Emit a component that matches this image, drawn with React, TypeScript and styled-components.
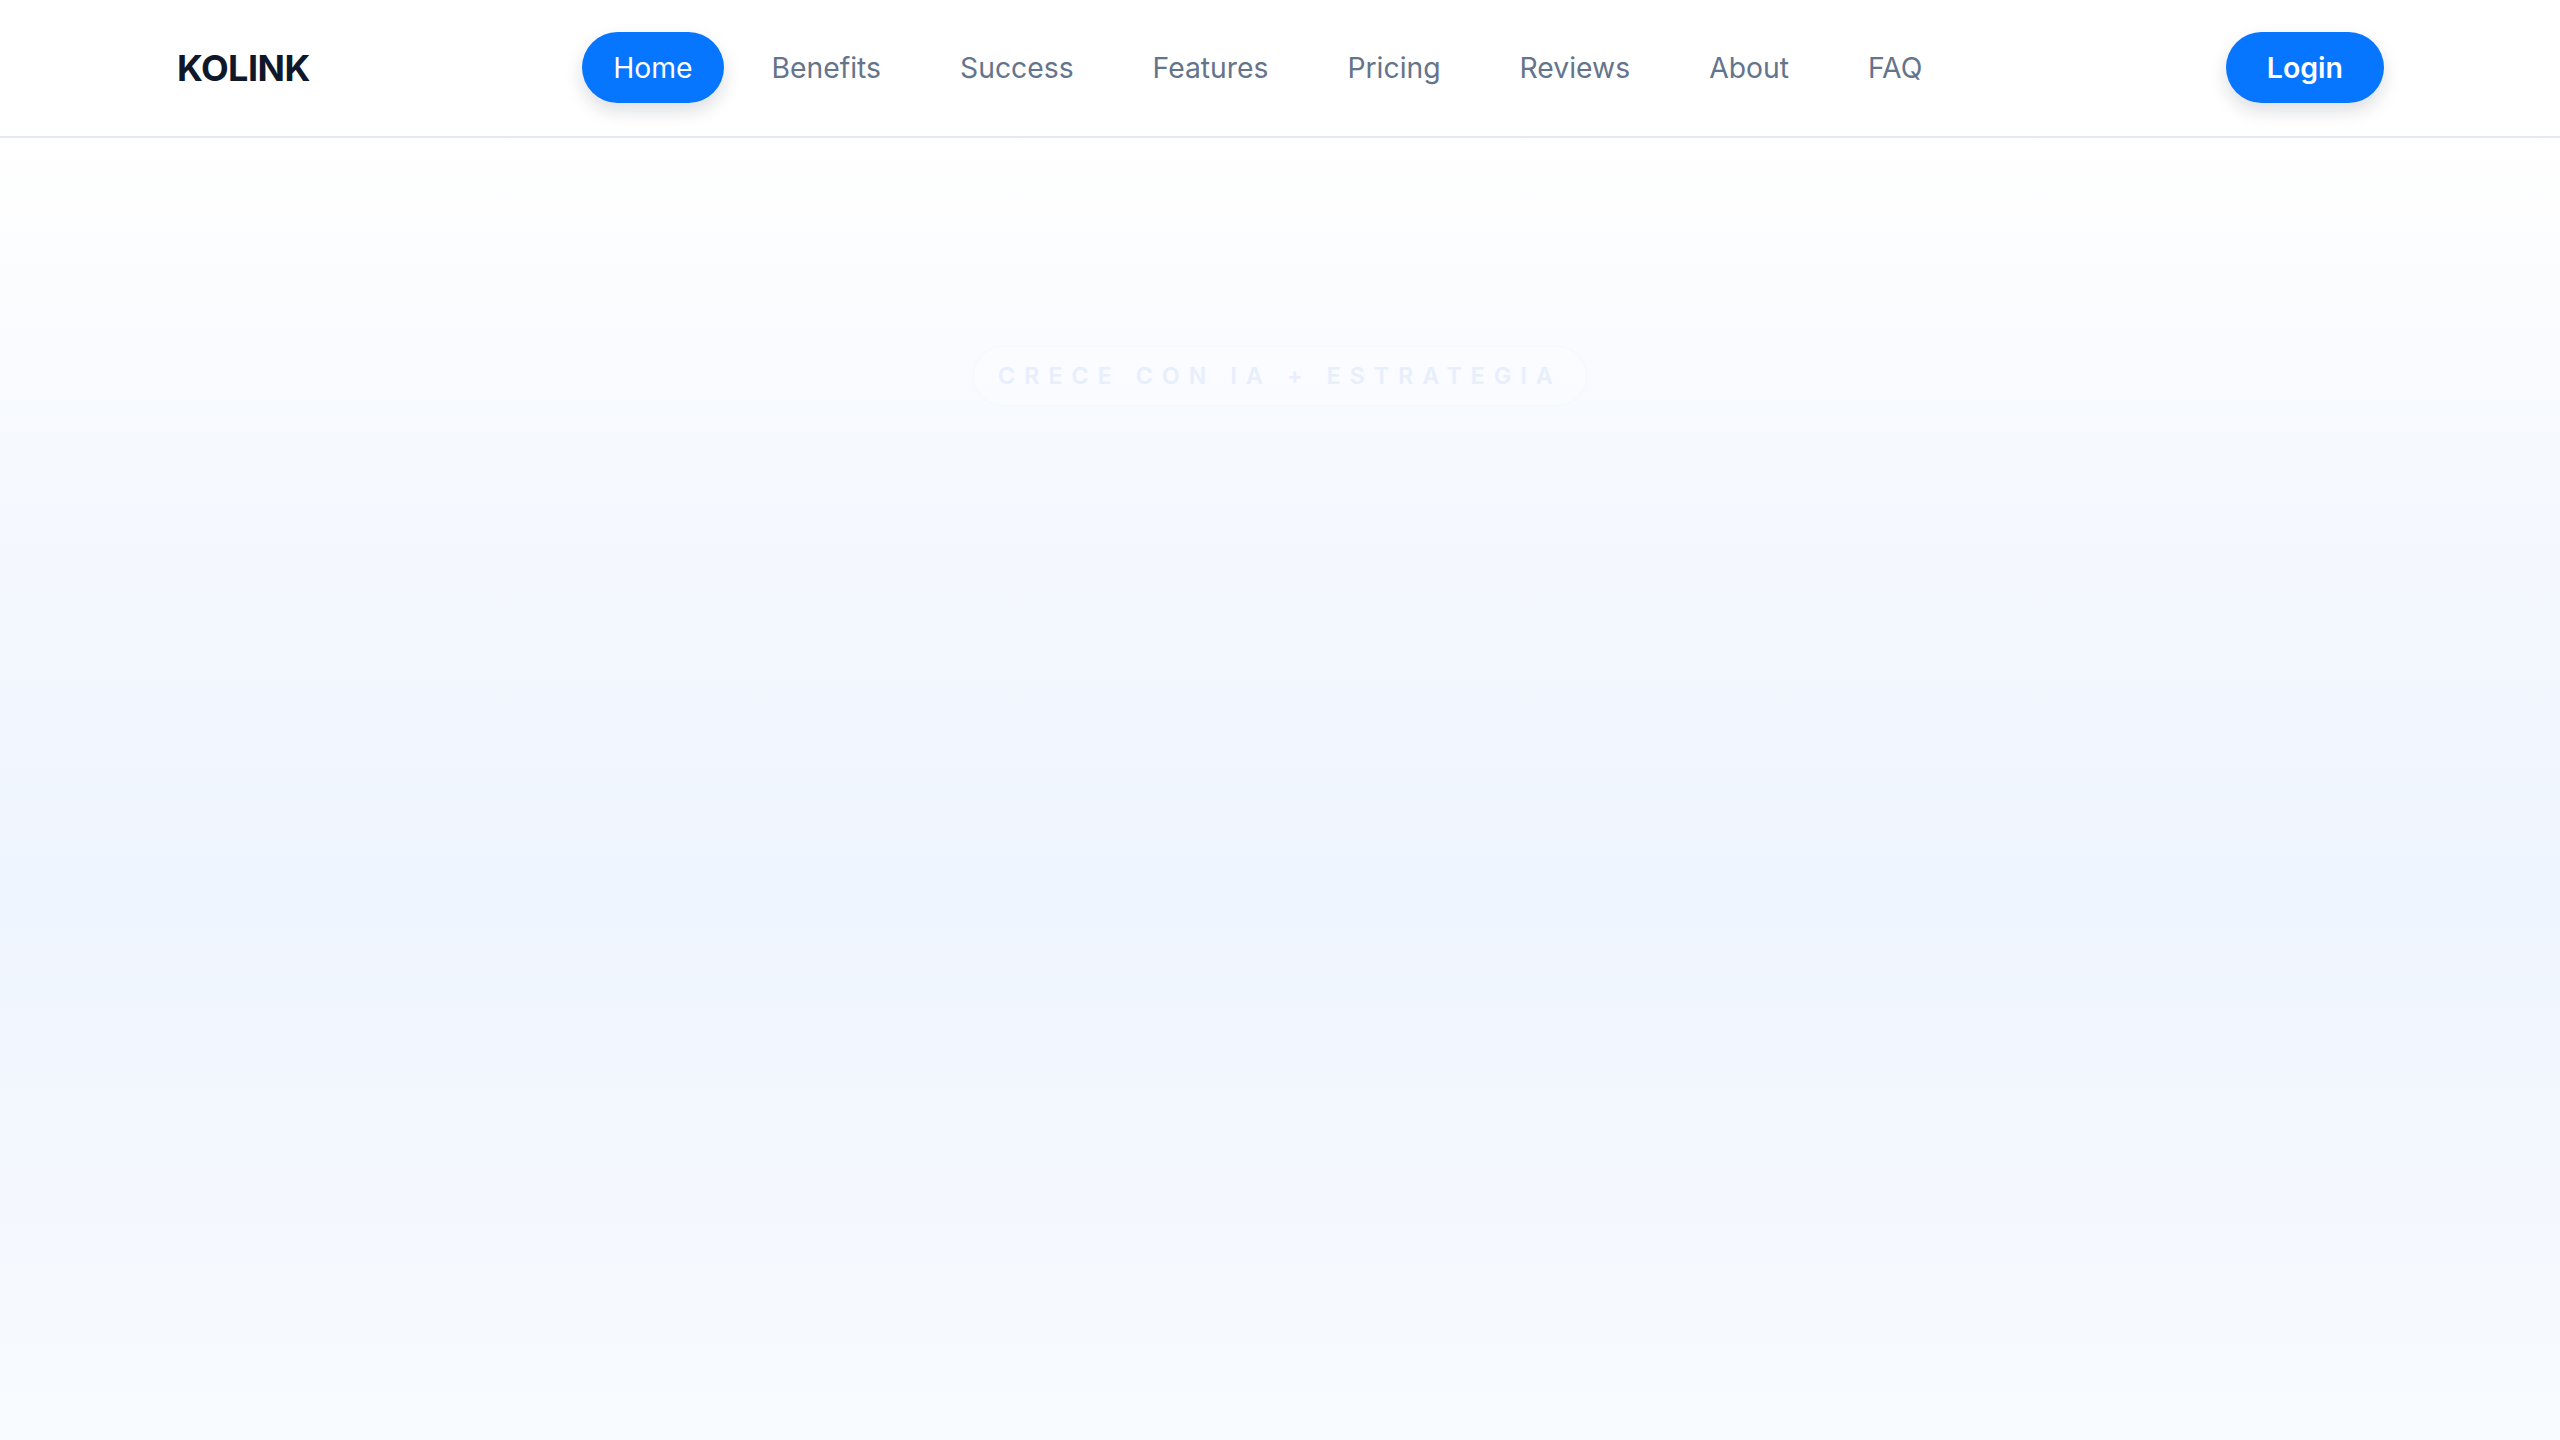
import React from "react";
import styled, { createGlobalStyle } from "styled-components";

const GlobalStyle = createGlobalStyle`
  * { box-sizing: border-box; }
  html, body { margin: 0; padding: 0; }
  body {
    font-family: Inter, "Noto Sans", "Liberation Sans", sans-serif;
    background: #ffffff;
    -webkit-font-smoothing: antialiased;
  }
`;

const Page = styled.div`
  min-height: 100vh;
  display: flex;
  flex-direction: column;
`;

const Header = styled.header`
  height: 138px;
  background: #ffffff;
  border-bottom: 2px solid #e4e9f3;
  display: flex;
  justify-content: center;
`;

const HeaderInner = styled.div`
  width: 100%;
  max-width: 2208px;
  display: flex;
  align-items: center;
  justify-content: space-between;
  padding-bottom: 1px;
`;

const Logo = styled.div`
  font-size: 36px;
  font-weight: 700;
  letter-spacing: -0.015em;
  color: #0f172a;
  padding-left: 1px;
`;

const Nav = styled.nav`
  display: flex;
  align-items: center;
  gap: 16px;
`;

const NavItem = styled.a<{ $active?: boolean }>`
  display: inline-flex;
  align-items: center;
  height: 71px;
  padding: 0 31.5px;
  border-radius: 999px;
  font-size: 28.3px;
  font-weight: 400;
  text-decoration: none;
  color: ${(p) => (p.$active ? "#ffffff" : "#64748b")};
  background: ${(p) => (p.$active ? "#0675ff" : "transparent")};
  box-shadow: ${(p) =>
    p.$active ? "0 8px 18px rgba(15, 23, 42, 0.14)" : "none"};
`;

const LoginButton = styled.button`
  height: 71px;
  padding: 0 41px;
  border: none;
  border-radius: 999px;
  background: #0675ff;
  color: #ffffff;
  font-family: inherit;
  font-size: 28.5px;
  font-weight: 600;
  box-shadow: 0 8px 18px rgba(15, 23, 42, 0.14);
`;

const Hero = styled.section`
  flex: 1;
  background: linear-gradient(
    180deg,
    #ffffff 0%,
    #f6f9fe 25%,
    #eff5fe 58%,
    #f4f8fe 80%,
    #f8fbff 100%
  );
  display: flex;
  flex-direction: column;
  align-items: center;
  padding-top: 208px;
`;

const Eyebrow = styled.div`
  display: inline-flex;
  align-items: center;
  height: 60px;
  padding: 0 24px;
  border-radius: 999px;
  background: rgba(255, 255, 255, 0.3);
  border: 1px solid rgba(226, 234, 248, 0.25);
  font-size: 23px;
  font-weight: 600;
  letter-spacing: 0.4em;
  color: #e7eefc;
  text-transform: uppercase;
`;

const navLinks = [
  "Home",
  "Benefits",
  "Success",
  "Features",
  "Pricing",
  "Reviews",
  "About",
  "FAQ",
];

export default function App() {
  return (
    <>
      <GlobalStyle />
      <Page>
        <Header>
          <HeaderInner>
            <Logo>KOLINK</Logo>
            <Nav>
              {navLinks.map((l, i) => (
                <NavItem key={l} href="#" $active={i === 0}>
                  {l}
                </NavItem>
              ))}
            </Nav>
            <LoginButton>Login</LoginButton>
          </HeaderInner>
        </Header>
        <Hero>
          <Eyebrow>Crece con IA + Estrategia</Eyebrow>
        </Hero>
      </Page>
    </>
  );
}
